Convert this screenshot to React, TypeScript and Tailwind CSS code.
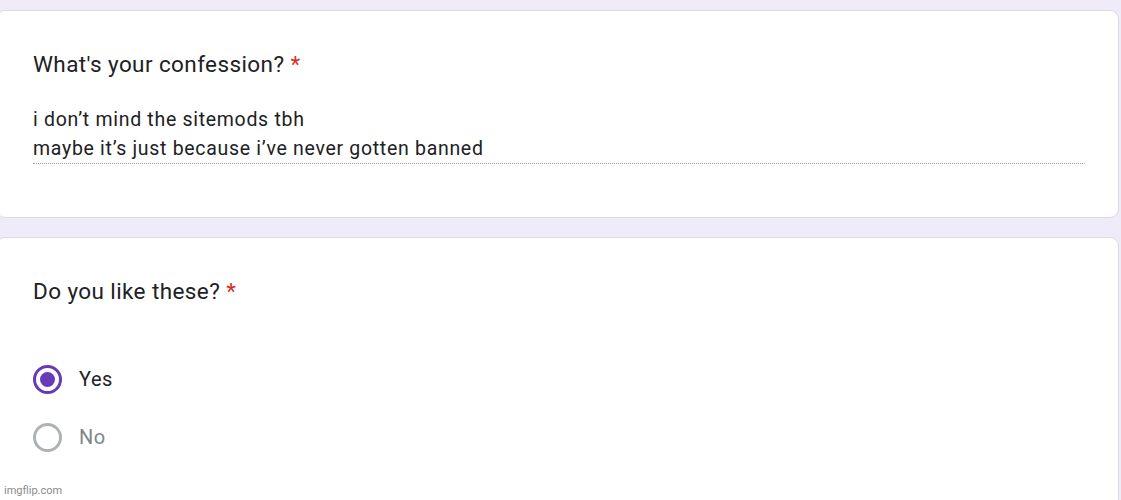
export default function App() {
  return (
    <div
      className="relative h-[500px] w-[1121px] overflow-hidden bg-[#f0ebf8] pt-[10px]"
      style={{ fontFamily: "Roboto, 'Liberation Sans', sans-serif" }}
    >
      <div className="ml-[-4px] mr-[2px] flex flex-col gap-[19px]">
        <div className="rounded-[9px] border border-[#dadce0] bg-white pb-[53px] pl-[36px] pr-[33px] pt-[38px]">
          <div className="text-[22.5px] leading-[30px] tracking-[0.4px] text-[#202124]">
            What's your confession?<span className="ml-[6px] text-[#d93025]">*</span>
          </div>
          <div className="mt-[26px] border-b border-dotted border-[#9aa0a6] text-[19.5px] leading-[29px] tracking-[0.7px] text-[#202124]">
            <div>i don’t mind the sitemods tbh</div>
            <div>maybe it’s just because i’ve never gotten banned</div>
          </div>
        </div>

        <div className="rounded-[9px] border border-[#dadce0] bg-white pb-[40px] pl-[36px] pr-[33px] pt-[38px]">
          <div className="text-[22.5px] leading-[30px] tracking-[0.4px] text-[#202124]">
            Do you like these?<span className="ml-[6px] text-[#d93025]">*</span>
          </div>
          <div className="mt-[44px] flex flex-col">
            <label className="flex h-[58px] items-center gap-[17px]">
              <span className="flex h-[29px] w-[29px] items-center justify-center rounded-full border-[3px] border-[#673ab7]">
                <span className="h-[15px] w-[15px] rounded-full bg-[#673ab7]" />
              </span>
              <span className="text-[20px] tracking-[0.5px] text-[#202124]">Yes</span>
            </label>
            <label className="flex h-[58px] items-center gap-[17px]">
              <span className="h-[29px] w-[29px] rounded-full border-[3px] border-[#aeb2b7]" />
              <span className="text-[20px] tracking-[0.5px] text-[#80868b]">No</span>
            </label>
          </div>
        </div>
      </div>

      <div className="absolute bottom-[1px] left-[4px] text-[11px] text-[#8a8a8a]">imgflip.com</div>
    </div>
  )
}
